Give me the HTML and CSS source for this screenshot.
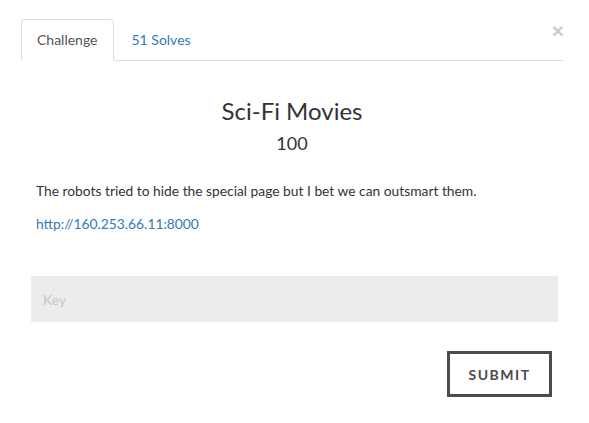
FILE: index.html
```html
<!DOCTYPE html>
<html>
<head>
<meta charset="utf-8">
<link rel="stylesheet" href="styles.css">
</head>
<body>
<div class="modal">
  <button class="close" type="button">&times;</button>
  <ul class="tabs">
    <li class="tab active">Challenge</li>
    <li class="tab">51 Solves</li>
  </ul>
  <div class="pane">
    <h3 class="title">Sci-Fi Movies</h3>
    <h4 class="value">100</h4>
    <p class="desc">The robots tried to hide the special page but I bet we can outsmart them.</p>
    <p class="desc"><a class="link" href="#">http://160.253.66.11:8000</a></p>
    <div class="form">
      <input class="key" type="text" placeholder="Key">
      <div class="actions">
        <button class="submit" type="button">Submit</button>
      </div>
    </div>
  </div>
</div>
</body>
</html>
```
FILE: styles.css
```css
html, body {
  margin: 0;
  padding: 0;
  background: #fff;
}
body {
  font-family: Lato, "Open Sans", sans-serif;
  font-size: 14px;
  color: #333;
}
.modal {
  position: relative;
  padding: 19px 26px 0 21px;
}
.close {
  position: absolute;
  top: 20px;
  right: 25px;
  border: 0;
  background: transparent;
  padding: 0;
  font-family: "Liberation Sans", sans-serif;
  font-size: 21px;
  font-weight: bold;
  line-height: 1;
  color: #000;
  opacity: 0.2;
}
.tabs {
  list-style: none;
  margin: 0;
  padding: 0;
  display: flex;
  border-bottom: 1px solid #ddd;
}
.tab {
  padding: 10px 15px;
  line-height: 20px;
  margin-right: 2px;
  margin-bottom: -1px;
  border: 1px solid transparent;
  border-radius: 4px 4px 0 0;
  color: #337ab7;
}
.tab.active {
  color: #555;
  border-color: #ddd;
  border-bottom-color: #fff;
  background: #fff;
}
.pane {
  padding-top: 10px;
}
.title {
  margin: 27px 0 0;
  text-align: center;
  font-size: 24px;
  font-weight: 400;
  line-height: 1.1;
  color: #333;
}
.value {
  margin: 10px 0 0;
  text-align: center;
  font-size: 18px;
  font-weight: 400;
  line-height: 1.1;
  color: #333;
}
.desc {
  margin: 27px 0 0 15px;
  line-height: 20px;
  font-size: 13.8px;
}
.desc + .desc {
  margin-top: 13px;
}
.link {
  color: #337ab7;
  text-decoration: none;
}
.form {
  margin: 42px 5px 0 10px;
}
.key {
  display: block;
  box-sizing: border-box;
  width: 100%;
  height: 46px;
  border: 0;
  background: #ececec;
  padding: 0 12px;
  font-family: Lato, sans-serif;
  font-size: 14px;
  color: #333;
  outline: none;
}
.key::placeholder {
  color: #c8c8c8;
}
.actions {
  display: flex;
  justify-content: flex-end;
  margin-top: 29px;
  padding-right: 6px;
}
.submit {
  box-sizing: border-box;
  width: 105px;
  height: 46px;
  border: 3px solid #4c4c4c;
  background: #fff;
  font-family: Lato, sans-serif;
  font-size: 14px;
  font-weight: 700;
  letter-spacing: 1.5px;
  text-transform: uppercase;
  color: #4c4c4c;
}
```
